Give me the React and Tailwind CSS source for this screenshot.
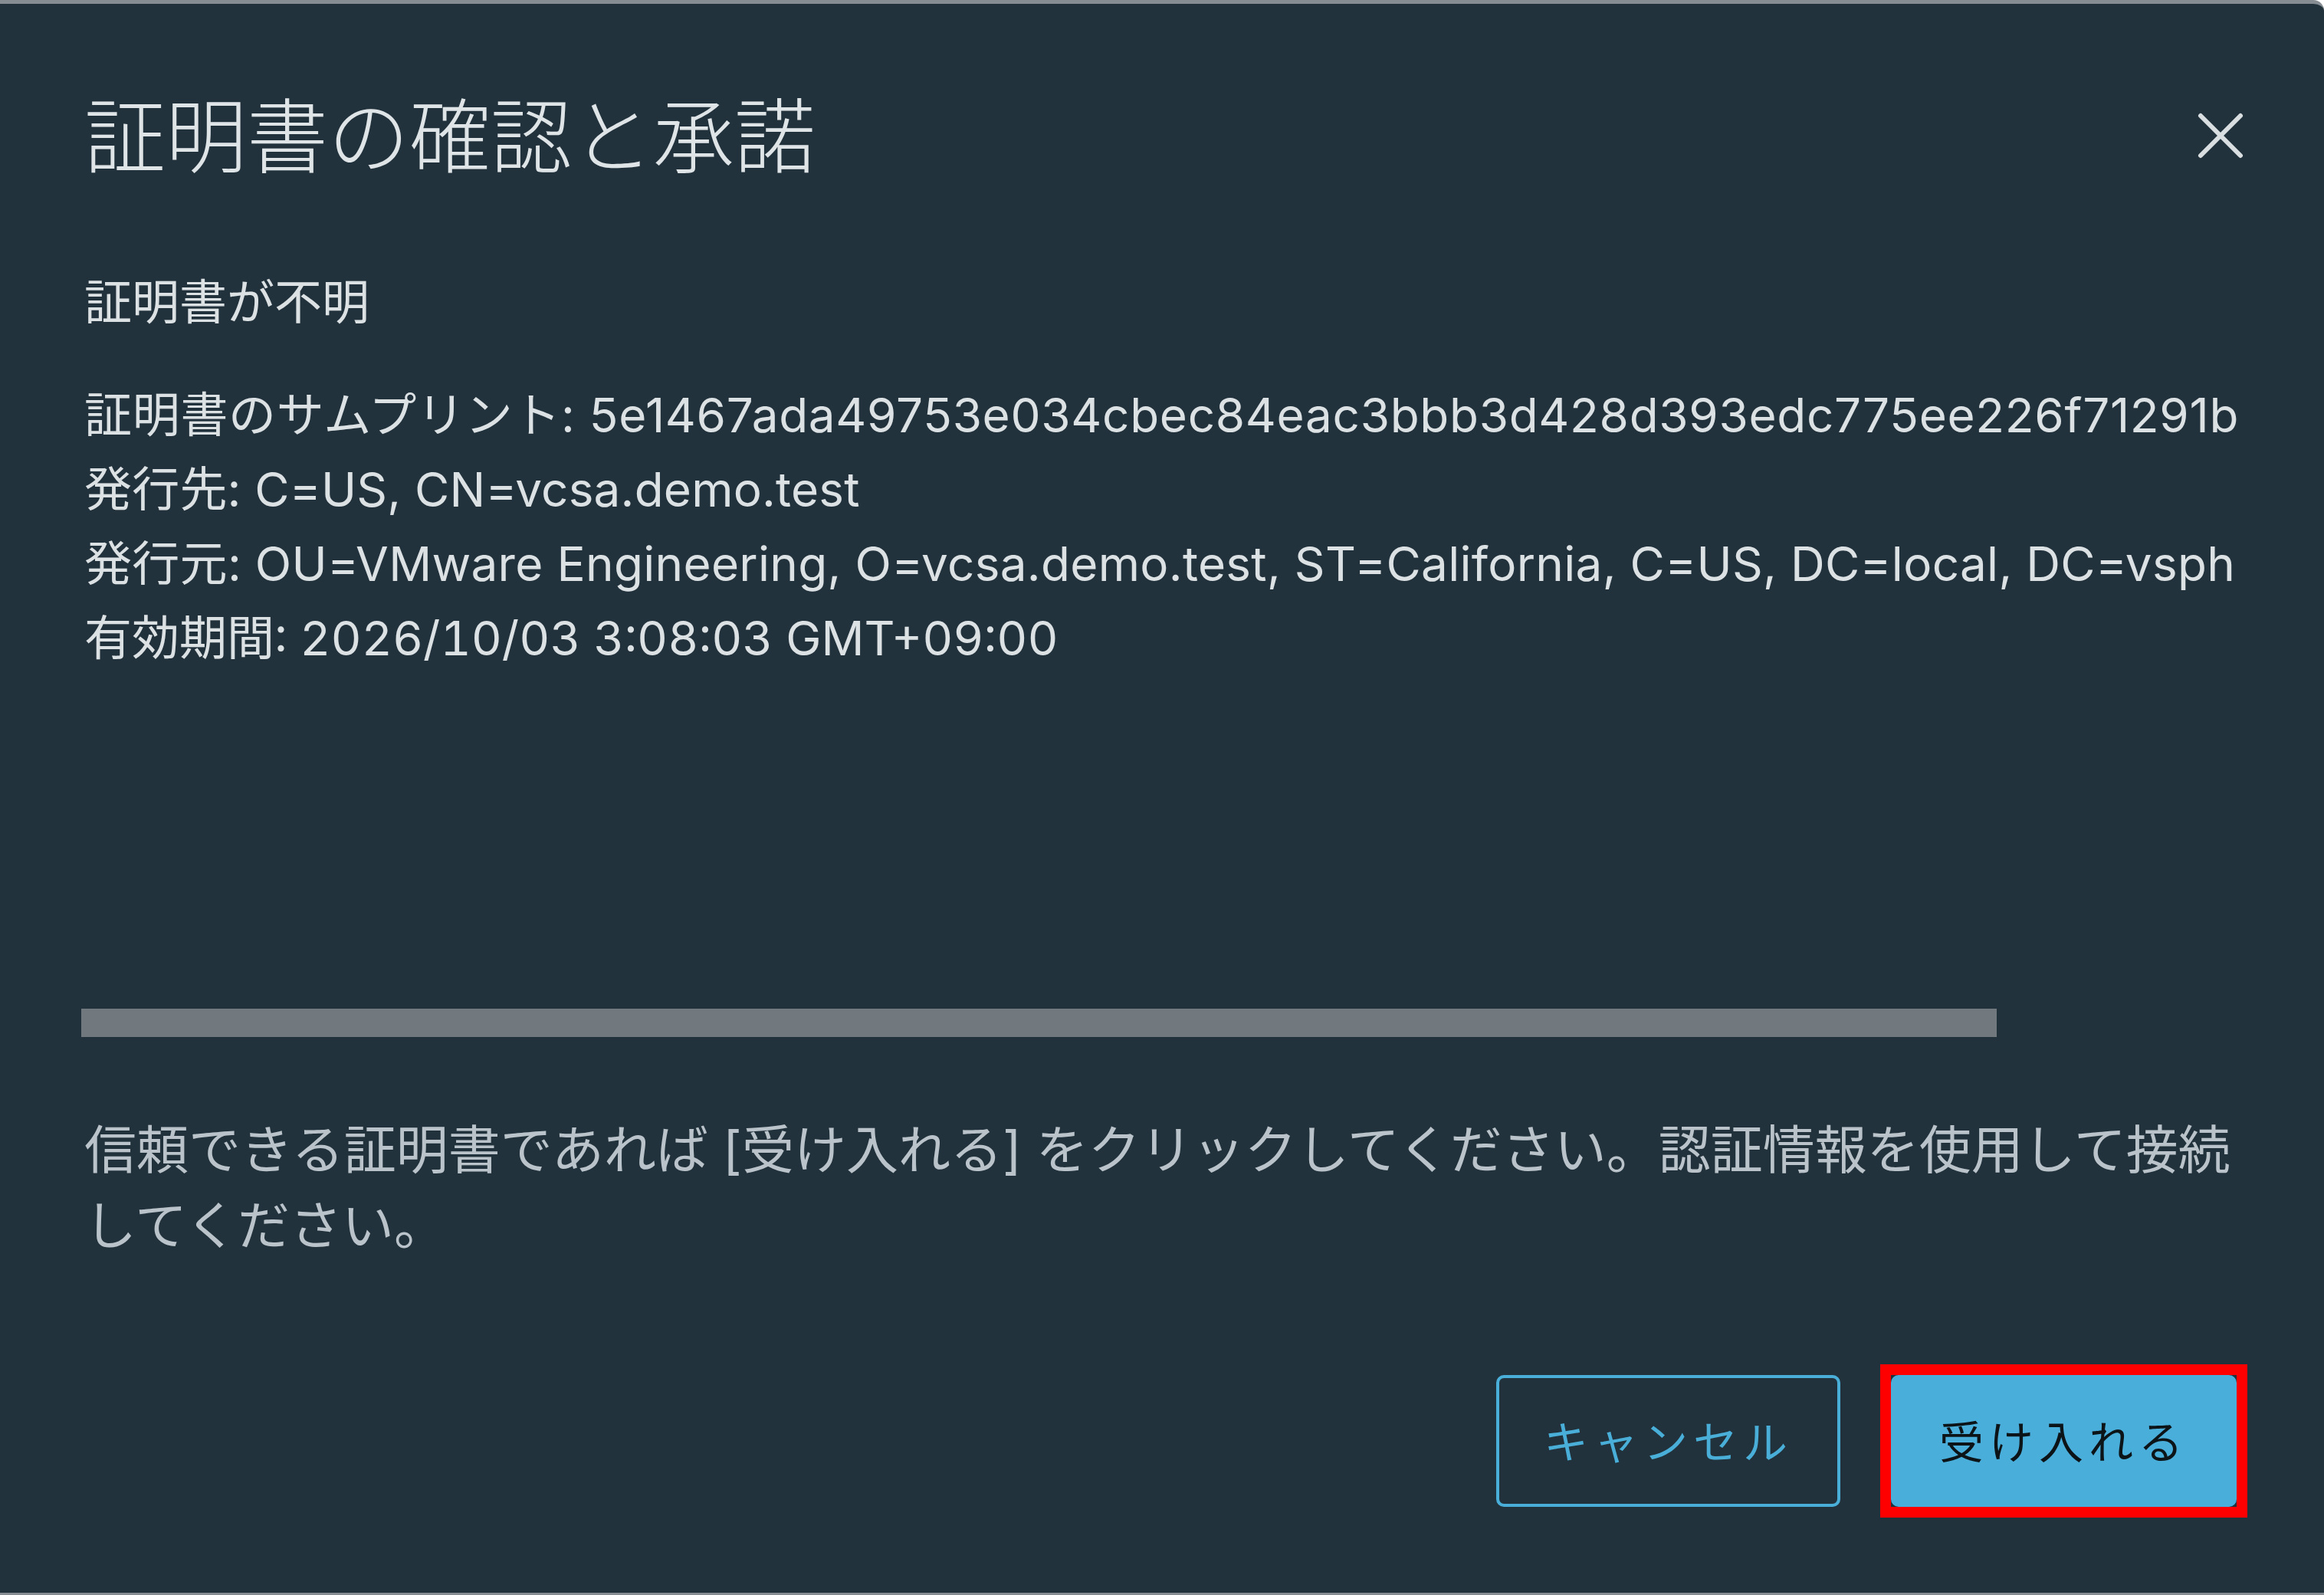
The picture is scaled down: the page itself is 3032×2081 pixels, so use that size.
export default function App() {
  const infoLines = [
    { text: "証明書のサムプリント: 5e1467ada49753e034cbec84eac3bbb3d428d393edc775ee226f71291b", cls: "tracking-[0.7px]" },
    { text: "発行先: C=US, CN=vcsa.demo.test", cls: "tracking-[0.2px]" },
    { text: "発行元: OU=VMware Engineering, O=vcsa.demo.test, ST=California, C=US, DC=local, DC=vsph", cls: "tracking-[0.3px]" },
    { text: "有効期間: 2026/10/03 3:08:03 GMT+09:00", cls: "tabular-nums" },
  ];

  return (
    <div className="w-[3032px] h-[2081px] bg-[#22323c] border-t-[5px] border-b-[3px] border-[#868e93] rounded-tr-[14px] overflow-hidden flex flex-col font-['Inter','Noto_Sans_CJK_JP',sans-serif]">
      {/* header */}
      <div className="flex items-start justify-between pl-[110px] pr-[105px] pt-[113px]">
        <h1 className="text-[106px] leading-[106px] font-light text-[#dfe4e7] font-['Noto_Sans_CJK_JP',sans-serif]">
          証明書の確認と承諾
        </h1>
        <button className="mt-[29px] w-[60px] h-[60px]">
          <svg width="60" height="60" viewBox="0 0 60 60">
            <path d="M4 4 L56 56 M56 4 L4 56" stroke="#d9dee1" strokeWidth="6" strokeLinecap="round" />
          </svg>
        </button>
      </div>

      {/* body */}
      <div className="pl-[110px] pr-[112px] pt-[140px]">
        <p className="text-[62px] leading-[62px] text-[#dce1e4]">証明書が不明</p>
        <div className="mt-[67px] h-[860px] flex flex-col">
          <div className="overflow-hidden whitespace-nowrap text-[62px] leading-[97px] text-[#dce1e4]">
            {infoLines.map((line) => (
              <div key={line.text} className={line.cls}>{line.text}</div>
            ))}
          </div>
          <div className="mt-auto h-[37px] w-[2499px] -ml-[4px] bg-[#72797e]" />
        </div>
        <p className="mt-[98px] text-[68px] leading-[99px] text-[#b9c3c9]">
          信頼できる証明書であれば [受け入れる] をクリックしてください。認証情報を使用して接続してください。
        </p>
      </div>

      {/* footer */}
      <div className="mt-[131px] flex items-center justify-end gap-[52px] pr-[100px]">
        <button className="w-[449px] h-[172px] pb-[4px] border-[4px] border-[#49afd9] rounded-[10px] text-[58px] tracking-[0.12em] text-[#49afd9] font-['Noto_Sans_CJK_JP',sans-serif]">
          キャンセル
        </button>
        <div className="border-[14px] border-[#ff0000] bg-[#22323c]">
          <button className="block w-[451px] h-[172px] pb-[4px] bg-[#4aaedb] rounded-[10px] text-[58px] tracking-[0.12em] text-[#0d1418] font-['Noto_Sans_CJK_JP',sans-serif]">
            受け入れる
          </button>
        </div>
      </div>
    </div>
  );
}
